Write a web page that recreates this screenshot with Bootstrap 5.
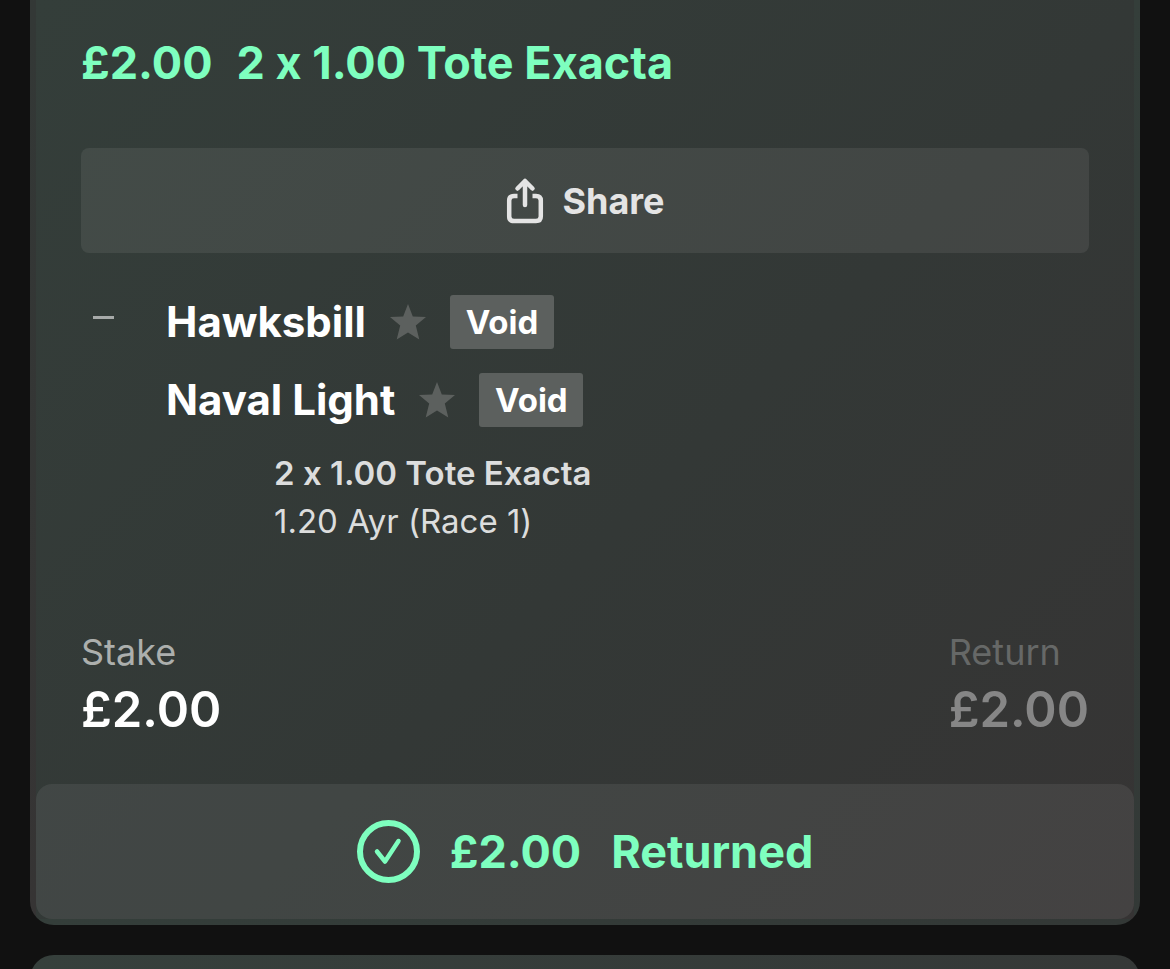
<!DOCTYPE html>
<html lang="en">
<head>
<meta charset="utf-8">
<meta name="viewport" content="width=device-width, initial-scale=1">
<title>Settled bets</title>
<link href="https://cdn.jsdelivr.net/npm/bootstrap@5.3.0/dist/css/bootstrap.min.css" rel="stylesheet">
<style>
  body { background: #111; color: #fff; font-family: Inter, "Liberation Sans", sans-serif; font-feature-settings: "calt" 0; }
  .bets { padding: 0 30px; gap: 30px; }
  /* the card's gradient repeats under its see-through border */
  .bet-card { border: 6px solid transparent; border-radius: 24px; background-image: linear-gradient(135deg, #343e3a 0%, #333836 55%, #363434 100%); }
  .bet-open-top { border-top: 0; border-top-left-radius: 0; border-top-right-radius: 0; }
  .bet-next { border: 0; min-height: 60px; background-image: linear-gradient(90deg, #36403c, #353837); }
  .bet-content { padding: 35px 45px 46px; }
  .bet-title { font-size: 45px; line-height: 56px; font-weight: 700; gap: 24px; margin-bottom: 57px; }
  .mint { color: #7effbf; }
  .share-btn { height: 105px; gap: 17px; border: 0; border-radius: 8px; background: rgba(255,255,255,.075); color: #e4e4e4; font-size: 36px; font-weight: 700; margin-bottom: 42px; }
  .share-btn:hover { background: rgba(255,255,255,.12); color: #fff; }
  .dash-col { width: 85px; padding: 21px 0 0 12px; }
  .dash { width: 21px; height: 3px; background: #a7aaa9; }
  .runners { gap: 24px; }
  .runner { height: 54px; gap: 24px; }
  .runner-name { font-size: 42px; line-height: 54px; font-weight: 700; }
  .void-tag { width: 104px; height: 54px; line-height: 54px; border-radius: 3px; background: #5c605e; font-size: 33px; font-weight: 700; }
  .bet-info { margin: 22px 0 87px 193px; font-size: 33px; line-height: 48px; color: #dcdddd; }
  .sum-label { font-size: 36px; line-height: 40px; margin-bottom: 9px; color: #acafad; }
  .sum-value { font-size: 49px; line-height: 57px; font-weight: 600; }
  .sum-muted .sum-label { color: #666867; }
  .sum-muted .sum-value { color: #868686; }
  .returned { height: 135px; border-radius: 16px; background: rgba(255,255,255,.07); font-size: 45px; line-height: 54px; font-weight: 700; gap: 30px; }
</style>
</head>
<body>
<main class="bets d-flex flex-column vh-100 overflow-hidden">
  <article class="bet-card bet-open-top flex-shrink-0">
    <div class="bet-content">
      <h1 class="bet-title mint d-flex mt-0"><span>£2.00</span><span>2 x 1.00 Tote Exacta</span></h1>
      <button type="button" class="share-btn btn w-100 d-flex align-items-center justify-content-center p-0">
        <svg width="40" height="48" viewBox="0 0 40 48" fill="none" stroke="currentColor" stroke-width="4.500" stroke-linecap="round" stroke-linejoin="round" aria-hidden="true">
          <path d="M20 28V4M12.500 11.500L20 4L27.500 11.500"/>
          <path d="M12.500 19H9Q4.200 19 4.200 23.500V39.500Q4.200 44 9 44H31Q35.800 44 35.800 39.500V23.500Q35.800 19 31 19H27.500" stroke-linecap="butt"/>
        </svg>
        <span>Share</span>
      </button>
      <div class="d-flex">
        <div class="dash-col flex-shrink-0"><div class="dash"></div></div>
        <div class="runners d-flex flex-column">
          <div class="runner d-flex align-items-center">
            <span class="runner-name">Hawksbill</span>
            <svg width="36" height="38" viewBox="1 0 36 38" fill="#5c605e" aria-hidden="true"><path d="M19 1L23.800 13.500L37 14L26.800 22.400L30.300 36.500L19 29.500L7.700 36.500L11.200 22.400L1 14L14.200 13.500Z"/></svg>
            <span class="void-tag text-center">Void</span>
          </div>
          <div class="runner d-flex align-items-center">
            <span class="runner-name">Naval Light</span>
            <svg width="36" height="38" viewBox="1 0 36 38" fill="#5c605e" aria-hidden="true"><path d="M19 1L23.800 13.500L37 14L26.800 22.400L30.300 36.500L19 29.500L7.700 36.500L11.200 22.400L1 14L14.200 13.500Z"/></svg>
            <span class="void-tag text-center">Void</span>
          </div>
        </div>
      </div>
      <div class="bet-info"><div class="fw-semibold">2 x 1.00 Tote Exacta</div><div>1.20 Ayr (Race 1)</div></div>
      <div class="d-flex justify-content-between">
        <div><div class="sum-label">Stake</div><div class="sum-value">£2.00</div></div>
        <div class="sum-muted"><div class="sum-label">Return</div><div class="sum-value">£2.00</div></div>
      </div>
    </div>
    <div class="returned mint d-flex align-items-center justify-content-center">
      <svg width="63" height="63" viewBox="0 0 63 63" fill="none" stroke="currentColor" aria-hidden="true"><circle cx="31.500" cy="31.500" r="28.500" stroke-width="6"/><path d="M20 31.500L28 41.500L41.500 21" stroke-width="4.500" stroke-linecap="round" stroke-linejoin="round"/></svg>
      <span>£2.00</span><span>Returned</span>
    </div>
  </article>
  <article class="bet-card bet-next flex-grow-1 flex-shrink-0" aria-label="Next bet"></article>
</main>
<script src="https://cdn.jsdelivr.net/npm/bootstrap@5.3.0/dist/js/bootstrap.bundle.min.js"></script>
</body>
</html>
